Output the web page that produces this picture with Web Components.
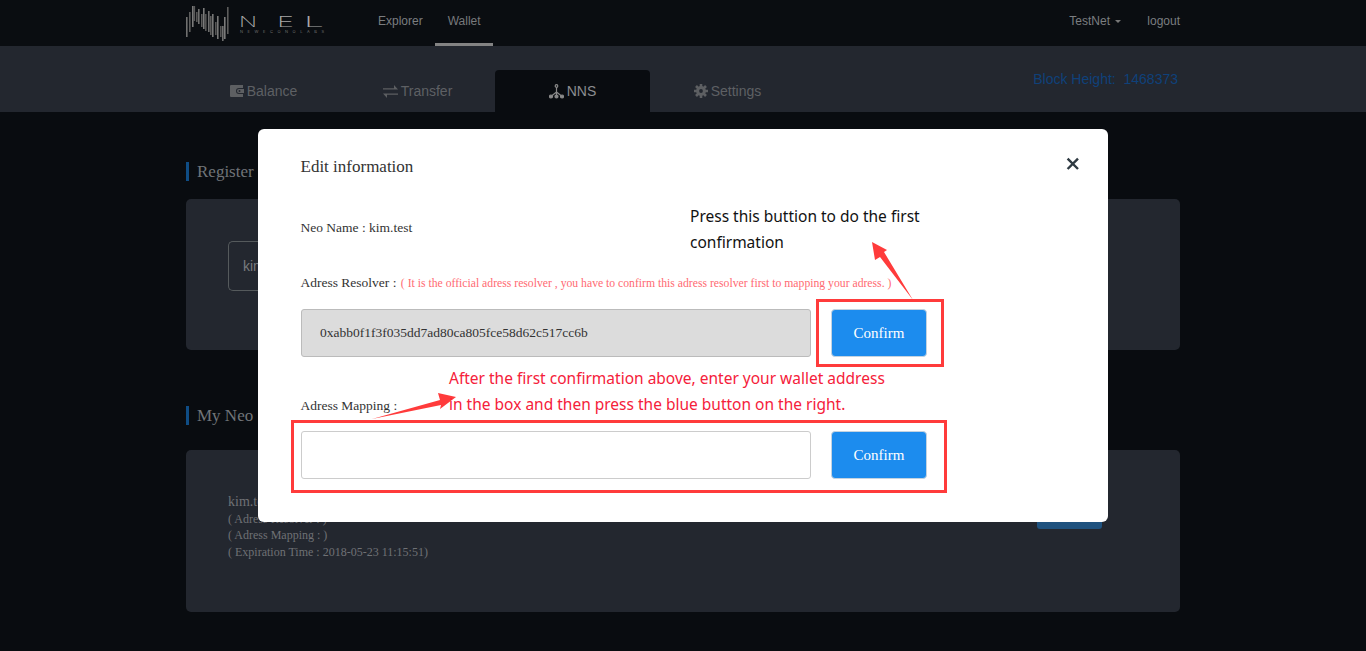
<!DOCTYPE html>
<html><head><meta charset="utf-8"><title>NEL Wallet</title>
<style>html,body{margin:0;padding:0;height:100%;background:#090c10;overflow:hidden}</style>
</head><body>
<nel-app></nel-app>
<script>
const def=(name,html,init)=>customElements.define(name,class extends HTMLElement{constructor(){super();this.attachShadow({mode:'open'}).innerHTML=html;}connectedCallback(){init&&init(this)}});

const bars=[[0,17,37,'#6f6f6f'],[3,12,32,'#5c5c5c'],[6,6,27,'#7a7a7a'],[7.500,6,21,'#5a5a5a'],[10,12,22,'#555'],[12,9,24,'#6f6f6f'],[15,14,27,'#5c5c5c'],[17,8,29,'#7a7a7a'],[19,14,31,'#555'],[22,11,32,'#6f6f6f'],[24,16,35,'#5a5a5a'],[26,14,37,'#777'],[29,22,35,'#555'],[31,16,39,'#777'],[34,26,37,'#555'],[36,26,41,'#6f6f6f'],[38,17,39,'#7a7a7a'],[41,7,34,'#5c5c5c']];
def('nel-logo',`<style>:host{display:block;width:145px;height:46px;flex:none}svg{display:block}text{font-family:"Inter","Liberation Sans",sans-serif}</style>
<svg width="145" height="46" viewBox="0 0 145 46">
<g stroke-width="1.600" fill="none">${bars.map(b=>`<path stroke="${b[3]}" d="M${b[0]+.8} ${b[1]}V${b[2]}"/>`).join('')}</g>
<g font-size="15" font-weight="200" fill="#a8a8a8"><text x="53" y="26.500" textLength="18" lengthAdjust="spacingAndGlyphs">N</text><text x="91" y="26.500" textLength="17" lengthAdjust="spacingAndGlyphs">E</text><text x="118" y="26.500" textLength="20" lengthAdjust="spacingAndGlyphs">L</text></g>
<text x="54" y="33" font-size="4" fill="#707070" textLength="84">NEWECONOLABS</text>
</svg>`);

def('nel-nav',`<style>:host{display:block;height:46px;background:#0a0d11;font:12px "Liberation Sans",sans-serif;color:#7b7d80}
.in{width:994px;margin:0 auto;display:flex;height:46px}
.links{display:flex;margin-left:34px}
a{display:block;padding:0 12px 0 13px;line-height:42px;height:43px}
a.on{border-bottom:3px solid #838383;color:#77797c}
.r{margin-left:auto;display:flex;gap:25px;line-height:42px}
.tn{margin-right:1px}
.car{display:inline-block;border:3.500px solid transparent;border-top-color:#777;border-bottom:0;vertical-align:middle;margin-left:2px}
</style><div class="in"><nel-logo></nel-logo><div class="links"><a>Explorer</a><a class="on">Wallet</a></div>
<div class="r"><span class="tn">TestNet <i class="car"></i></span><span>logout</span></div></div>`);

const ic={
 wallet:`<svg width="15" height="12" viewBox="0 0 15 12"><path fill="#5d5f62" d="M1 0h12v3H9a3 3 0 0 0 0 6h4v3H1a1 1 0 0 1-1-1V1a1 1 0 0 1 1-1z"/><path fill="#5d5f62" d="M9 4h5v4H9a2 2 0 0 1 0-4z"/><circle cx="9.500" cy="6" r="1" fill="#23272f"/></svg>`,
 swap:`<svg width="15" height="13" viewBox="0 0 15 13"><path fill="#5d5f62" d="M0 3.200h11V0l4 4.500H0zM15 8.500v1.300H4V13L0 8.500z"/></svg>`,
 nns:`<svg width="15" height="15" viewBox="0 0 15 15" fill="none" stroke="#8a8a8a" stroke-width="1.200"><circle cx="7.500" cy="2" r="1.300"/><circle cx="2" cy="12.500" r="1.500" fill="#8a8a8a"/><circle cx="13" cy="12.500" r="1.500" fill="#8a8a8a"/><circle cx="7.500" cy="12.500" r="1.500" fill="#8a8a8a"/><path d="M7.500 3.300V12M7.500 8L2.500 12M7.500 8l5 4"/></svg>`,
 gear:`<svg width="14" height="14" viewBox="0 0 14 14"><circle cx="7" cy="7" r="3.400" fill="none" stroke="#5d5f62" stroke-width="3"/><path stroke="#5d5f62" stroke-width="2.600" d="M7 0v14M0 7h14M2 2l10 10M12 2L2 12"/><circle cx="7" cy="7" r="1.900" fill="#23272f"/></svg>`
};
def('nel-tab',`<style>:host{display:flex;width:155px;height:42px;align-items:center;justify-content:center;gap:3px;color:#5e6064;font:14px "Liberation Sans",sans-serif;box-sizing:border-box;border-radius:4px 4px 0 0}
:host([active]){background:#090c10;color:#8b8d90}
:host([icon=wallet]){gap:2px;padding-left:2px}
span{display:flex}svg{display:block}</style><span id="i"></span><slot></slot>`,
 el=>{el.shadowRoot.getElementById('i').innerHTML=ic[el.getAttribute('icon')]});

def('nel-tabs',`<style>:host{display:block;height:66px;background:#23272f;font-family:"Liberation Sans",sans-serif}
.in{width:996px;margin:0 auto;height:66px;display:flex;align-items:flex-end}
.bh{margin-left:auto;align-self:flex-start;margin-top:24px;color:#0f417a;font-size:14px;line-height:18px;margin-right:3px}
</style><div class="in">
<nel-tab icon="wallet">Balance</nel-tab><nel-tab icon="swap">Transfer</nel-tab><nel-tab icon="nns" active>NNS</nel-tab><nel-tab icon="gear">Settings</nel-tab>
<div class="bh">Block Height:&nbsp; 1468373</div></div>`);

def('nel-section',`<style>:host{display:block;width:994px;margin:0 auto}
h2{margin:0;font:400 17px/19px "Liberation Serif",serif;color:#707478;border-left:3px solid #0f4d85;padding-left:8px;height:19px}
.p{margin-top:var(--gap,18px);background:#23272f;border-radius:5px;box-sizing:border-box;height:var(--h);padding:var(--pad);position:relative}
</style><h2><slot name="t"></slot></h2><div class="p"><slot></slot></div>`);

def('nel-main',`<style>:host{display:block}
.a{--h:151px;--gap:18px;--pad:42px;padding-top:50px;display:block}
.b{--h:162px;--gap:25px;--pad:42px;display:block;margin-top:56px}
.inp{width:30px;height:48px;border:1px solid #555a5c;border-right:0;border-radius:5px 0 0 5px;padding-left:14px;font:14px/48px "Liberation Sans",sans-serif;color:#777a7e}
.info{font:12px/16.500px "Liberation Serif",serif;color:#6f7175;white-space:nowrap}
.info .n{font-size:14px;line-height:19px;margin-bottom:-.5px}
.btn{position:absolute;left:851px;top:47px;width:65px;height:32px;background:#1f527f;border-radius:3px}
</style>
<nel-section class="a" id="a"><span slot="t">Register</span><div class="inp">kim</div></nel-section>
<nel-section class="b"><span slot="t">My Neo</span>
<div class="info"><div class="n">kim.test</div><div>( Adress Resolver : )</div><div>( Adress Mapping : )</div><div>( Expiration Time : 2018-05-23 11:15:51)</div></div><div class="btn"></div></nel-section>`);

def('nel-confirm',`<style>:host{display:block;flex:none;width:96px;height:48px;background:#1c8cee;border:1px solid #c3d3e0;border-radius:4px;box-sizing:border-box;color:#fff;font:15px/47px "Liberation Serif",serif;text-align:center}</style>Confirm`);

def('nel-modal',`<style>:host{position:absolute;left:258px;top:129px;width:850px;height:393px;background:#fff;border-radius:6px;box-sizing:border-box;padding:28px 43px 0;font:13.500px/18px "Liberation Serif",serif;color:#333}
h3{margin:0 0 0 -.5px;font:400 17px/20px "Liberation Serif",serif;color:#333}
.x{position:absolute;left:806px;top:26px}
.name{margin-top:42px;margin-left:-.5px}
.res{margin-top:37px;white-space:nowrap;margin-left:-.5px}
.res small{font-size:11.700px;color:#ff6a72;margin-left:1px}
.row{display:flex;gap:20px;align-items:flex-start}
.f{width:510px;height:48px;box-sizing:border-box;border:1px solid #ccc;border-radius:3px;padding-left:18px;line-height:46px;flex:none}
.dis{background:#dcdcdc;border-color:#bbb}
.r1{margin-top:16px}
.map{margin-top:40px;margin-left:-.5px}
.r2{margin-top:16px}
</style>
<h3>Edit information</h3>
<svg class="x" width="18" height="18" viewBox="0 0 18 18"><path d="M3.600 3.600L14 14M14 3.600L3.600 14" stroke="#2f3a42" stroke-width="2.400"/></svg>
<div class="name">Neo Name : kim.test</div>
<div class="res">Adress Resolver : <small>( It is the official adress resolver , you have to confirm this adress resolver first to mapping your adress. )</small></div>
<div class="row r1"><div class="f dis">0xabb0f1f3f035dd7ad80ca805fce58d62c517cc6b</div><nel-confirm></nel-confirm></div>
<div class="map">Adress Mapping :</div>
<div class="row r2"><div class="f"></div><nel-confirm></nel-confirm></div>`);

def('nel-notes',`<style>:host{position:absolute;left:0;top:0;width:1366px;height:651px;pointer-events:none;font:15.500px/26px "Noto Sans",sans-serif}
svg{position:absolute;left:0;top:0}
.t{position:absolute;white-space:nowrap}
.k{left:690px;top:203px;color:#111}
.r{left:449px;top:365px;color:#f5213a}
</style>
<svg width="1366" height="651" fill="none">
<rect x="817.500" y="300.500" width="125" height="65" stroke="#ff3b3b" stroke-width="3"/>
<rect x="292.500" y="421.500" width="653" height="70" stroke="#ff3b3b" stroke-width="3"/>
<path fill="#ff3b3b" d="M872 242L887 250 884 252 913 300 880 257 875 260z"/>
<path fill="#ff3b3b" d="M372 419L440 400 438 393 456 397 440 409 441 405z"/>
</svg>
<div class="t k">Press this buttion to do the first<br>confirmation</div>
<div class="t r">After the first confirmation above, enter your wallet address<br>in the box and then press the blue button on the right.</div>`);

def('nel-app',`<style>:host{display:block;position:relative;width:1366px;height:651px;background:#090c10;overflow:hidden}</style>
<nel-nav></nel-nav><nel-tabs></nel-tabs><nel-main></nel-main><nel-modal></nel-modal><nel-notes></nel-notes>`);
</script>
</body></html>
